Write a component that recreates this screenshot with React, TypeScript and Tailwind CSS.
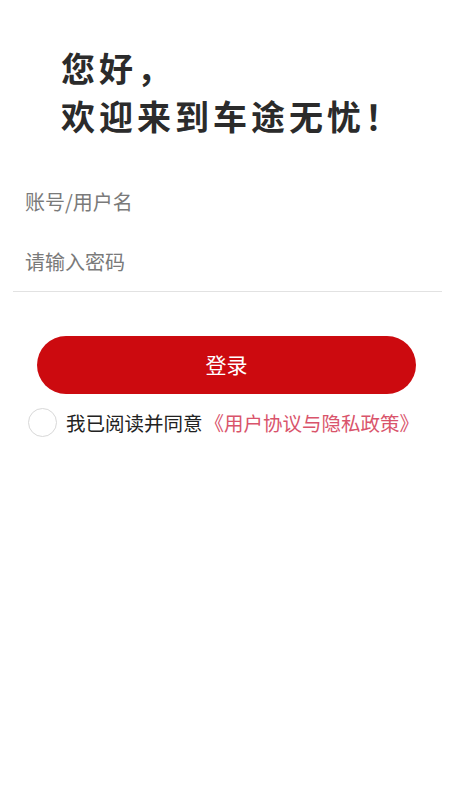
export default function App() {
  return (
    <div
      className="min-h-[800px] w-full bg-white"
      style={{ fontFamily: '"Noto Sans CJK SC", "Noto Sans", sans-serif' }}
    >
      <div className="pl-[61px] pt-[44px] text-[34px] font-bold leading-[48px] tracking-[4px] text-[#2b2b2b]">
        <div>您好，</div>
        <div>欢迎来到车途无忧！</div>
      </div>

      <div className="mt-[32px] pl-[13px] pr-[8px]">
        <div className="flex h-[60px] items-center pl-[12px] text-[20px] text-[#7a7a7a]">
          账号/用户名
        </div>
        <div className="flex h-[60px] items-center pl-[12px] text-[20px] text-[#7a7a7a]">
          请输入密码
        </div>
        <div className="mt-[-1px] h-px bg-[#e2e2e2]" />
      </div>

      <div className="mt-[44px] pl-[37px] pr-[34px]">
        <button className="flex h-[58px] w-full items-center justify-center rounded-full bg-[#cc0a0f] text-[21px] text-white">
          登录
        </button>
      </div>

      <div className="mt-[14px] flex items-center pl-[28px]">
        <span className="h-[29px] w-[29px] rounded-full border border-[#d8d8d8]" />
        <span className="ml-[9px] text-[19.5px] text-[#222]">
          我已阅读并同意
          <span className="ml-[2px] text-[#d9546b]">《用户协议与隐私政策》</span>
        </span>
      </div>
    </div>
  );
}
